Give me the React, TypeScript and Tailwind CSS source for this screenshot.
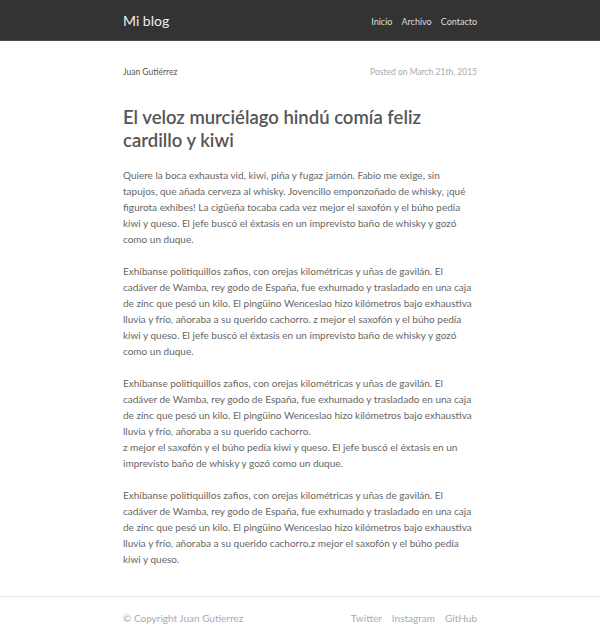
export default function App() {
  const nav = ["Inicio", "Archivo", "Contacto"];
  const social = ["Twitter", "Instagram", "GitHub"];

  return (
    <div className="min-h-[638px] bg-white font-['Lato',sans-serif] flex flex-col">
      <header className="h-[41px] bg-[#333333] border-b border-[#4a4a4a]">
        <div className="w-[354px] mx-auto h-full flex items-center justify-between pt-[1px]">
          <span className="text-[14px] text-[#eeeeee]">Mi blog</span>
          <nav className="flex gap-[9px] text-[9px] text-[#dddddd] pt-[2px]">
            {nav.map((n) => (
              <span key={n}>{n}</span>
            ))}
          </nav>
        </div>
      </header>

      <main className="w-[354px] mx-auto pt-[25px] pb-[29px]">
        <div className="flex justify-between text-[8.5px]">
          <span className="text-[#555555]">Juan Gutiérrez</span>
          <span className="text-[#aaaaaa]">Posted on March 21th, 2015</span>
        </div>

        <h1 className="mt-[27px] text-[18.5px] leading-[23px] font-semibold text-[#555555] pr-[40px]">
          El veloz murciélago hindú comía feliz cardillo y kiwi
        </h1>

        <div className="mt-[15px] text-[10px] leading-[16px] text-[#666666] space-y-[16px]">
          <p>
            Quiere la boca exhausta vid, kiwi, piña y fugaz jamón. Fabio me exige, sin
            <br />
            tapujos, que añada cerveza al whisky. Jovencillo emponzoñado de whisky, ¡qué
            <br />
            figurota exhibes! La cigüeña tocaba cada vez mejor el saxofón y el búho pedía
            <br />
            kiwi y queso. El jefe buscó el éxtasis en un imprevisto baño de whisky y gozó
            <br />
            como un duque.
          </p>
          <p>
            Exhíbanse politiquillos zafios, con orejas kilométricas y uñas de gavilán. El cadáver de Wamba, rey
            godo de España, fue exhumado y trasladado en una caja de zinc que pesó un kilo. El pingüino
            Wenceslao hizo kilómetros bajo exhaustiva lluvia y frío, añoraba a su querido cachorro. z mejor el
            saxofón y el búho pedía kiwi y queso. El jefe buscó el éxtasis en un imprevisto baño de whisky y
            gozó como un duque.
          </p>
          <p>
            Exhíbanse politiquillos zafios, con orejas kilométricas y uñas de gavilán. El cadáver de Wamba, rey
            godo de España, fue exhumado y trasladado en una caja de zinc que pesó un kilo. El pingüino
            Wenceslao hizo kilómetros bajo exhaustiva lluvia y frío, añoraba a su querido cachorro.
            <br />
            z mejor el saxofón y el búho pedía kiwi y queso. El jefe buscó el éxtasis en un imprevisto baño de
            whisky y gozó como un duque.
          </p>
          <p>
            Exhíbanse politiquillos zafios, con orejas kilométricas y uñas de gavilán. El cadáver de Wamba, rey
            godo de España, fue exhumado y trasladado en una caja de zinc que pesó un kilo. El pingüino
            Wenceslao hizo kilómetros bajo exhaustiva lluvia y frío, añoraba a su querido cachorro.z mejor el
            saxofón y el búho pedía kiwi y queso.
          </p>
        </div>
      </main>

      <footer className="border-t border-[#e5e5e5]">
        <div className="w-[354px] mx-auto h-[43px] flex items-center justify-between text-[10px] text-[#aaaaaa]">
          <span>© Copyright Juan Gutierrez</span>
          <div className="flex gap-[10px]">
            {social.map((s) => (
              <span key={s}>{s}</span>
            ))}
          </div>
        </div>
      </footer>
    </div>
  );
}
